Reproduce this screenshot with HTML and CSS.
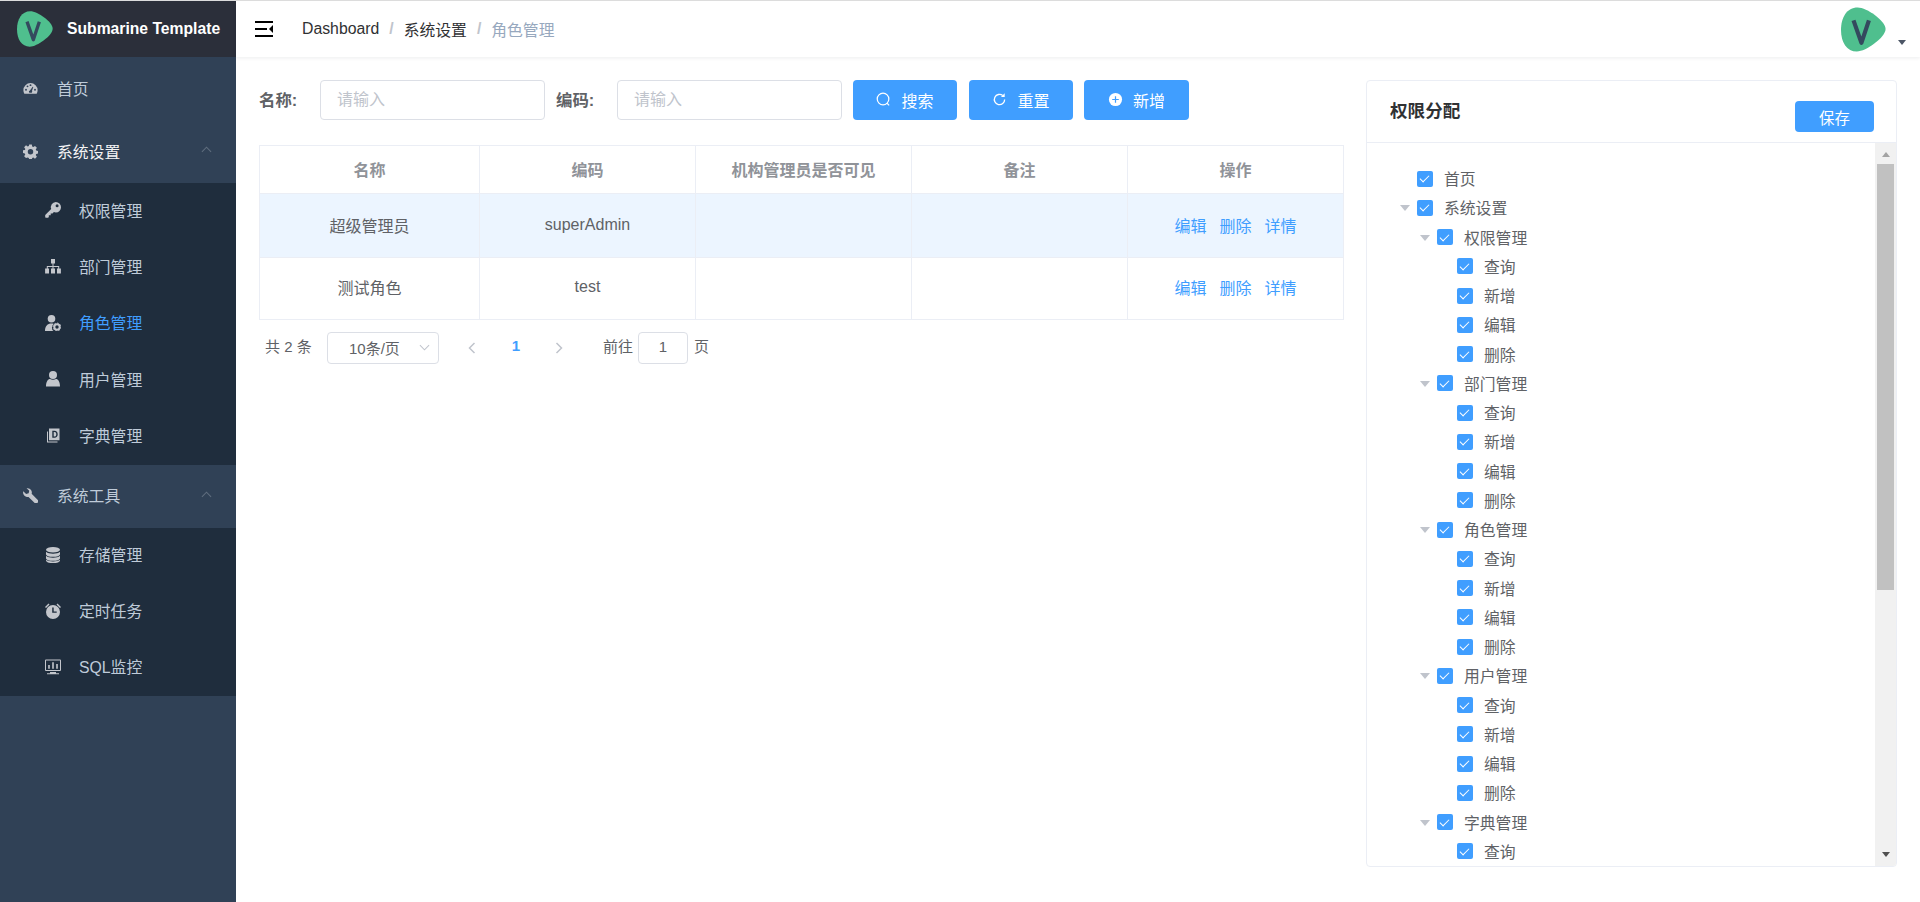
FILE: index.html
```html
<!DOCTYPE html>
<html lang="zh">
<head>
<meta charset="utf-8">
<title>角色管理</title>
<link rel="stylesheet" href="styles.css">
</head>
<body>
<svg class="defs" width="0" height="0">
  <symbol id="logo" viewBox="0 0 108 108">
    <path fill="#4fbf8e" d="M40 1C62 1 107 33 107 53C107 73 60 107 38 107C14 107 0 85 0 55C0 25 14 1 40 1Z"/>
    <path fill="none" stroke="#34495e" stroke-width="10" stroke-linejoin="round" d="M30 32L49 86L67 32"/>
  </symbol>
</svg>
<div class="app">
  <aside class="sidebar">
    <div class="brand">
      <svg class="brand-logo"><use href="#logo"/></svg>
      <span class="brand-title">Submarine Template</span>
    </div>
    <a class="menu-item">
      <svg class="icon" viewBox="0 0 16 16"><path d="M8 2.200A7.600 7.600 0 0 0 .4 9.800c0 1.400.4 2.600 1 3.700h13.200c.6-1.100 1-2.300 1-3.700A7.600 7.600 0 0 0 8 2.200zM3.200 10.300a1 1 0 1 1 0-2 1 1 0 0 1 0 2zm1.600-3.600a1 1 0 1 1 0-2 1 1 0 0 1 0 2zM8 5.400a1 1 0 1 1 0-2 1 1 0 0 1 0 2zm1.300 7H6.700a1.400 1.400 0 0 1 .7-2.200L10.300 6l.7.3-1.400 4.100c.4.6.2 1.500-.3 2zm3.500-2.100a1 1 0 1 1 0-2 1 1 0 0 1 0 2z"/></svg>
      <span>首页</span>
    </a>
    <a class="menu-item open">
      <svg class="icon" viewBox="0 0 16 16"><path fill-rule="evenodd" d="M6.600.6h2.800l.4 2.100 1.200.5L12.800 2l2 2-1.200 1.800.5 1.200 2.100.4v2.800l-2.100.4-.5 1.200 1.200 1.800-2 2-1.800-1.200-1.200.5-.4 2.100H6.600l-.4-2.100-1.200-.5L3.200 15l-2-2 1.200-1.800-.5-1.200L-.1 9.600V6.800l2.100-.4.5-1.200L1.200 3.400l2-2L5 2.600l1.200-.5zM8 5.300a2.900 2.900 0 1 0 0 5.800 2.900 2.900 0 0 0 0-5.800z"/></svg>
      <span>系统设置</span>
      <svg class="chev" viewBox="0 0 12 7"><path d="M1 6l5-5 5 5"/></svg>
    </a>
    <div class="submenu">
      <a class="sub-item">
        <svg class="icon" viewBox="0 0 16 16"><path fill-rule="evenodd" d="M10.800 0a5.200 5.200 0 0 1 0 10.400c-.7 0-1.300-.1-1.900-.4l-1.400 1.400H5.700v1.900H3.800V15l-.7.700H.6L.2 15v-2l6-6a5.200 5.200 0 0 1 4.600-7zm1.300 2.300a1.500 1.500 0 1 0 0 3 1.500 1.500 0 0 0 0-3z"/></svg>
        <span>权限管理</span>
      </a>
      <a class="sub-item">
        <svg class="icon" viewBox="0 0 16 16"><path d="M6 0h4v4.500H8.500V7h5.700v2.500H15.900v5H12V9.500h1.200V8H8.500v1.500H10v5H6v-5h1.500V8H2.800v1.500H4v5H.1v-5h1.700V7h5.700V4.500H6z"/></svg>
        <span>部门管理</span>
      </a>
      <a class="sub-item active">
        <svg class="icon" viewBox="0 0 16 16"><circle cx="6.500" cy="3.800" r="3.800"/><path d="M0 16c0-5 2.500-7.500 6.500-7.500 1 0 1.700.2 2.300.4A4.500 4.500 0 0 0 8.500 16z"/><circle cx="12" cy="12" r="2.700" fill="none" stroke="currentColor" stroke-width="2"/><circle cx="12" cy="12" r="3.900" fill="none" stroke="currentColor" stroke-width="1" stroke-dasharray="1.500 1.500"/></svg>
        <span>角色管理</span>
      </a>
      <a class="sub-item">
        <svg class="icon" viewBox="0 0 16 16"><circle cx="8" cy="4" r="4"/><path d="M1 15.500c0-5 2-7.500 4-7.500 1.500 1 4.500 1 6 0 2 0 4 2.500 4 7.500z"/></svg>
        <span>用户管理</span>
      </a>
      <a class="sub-item">
        <svg class="icon" viewBox="0 0 16 16"><path fill-rule="evenodd" d="M4 .5h10.500v11.700H4zM7.300 2.800v7h2.200c2 0 3.200-1.400 3.200-3.500s-1.200-3.500-3.200-3.500zm1.400 1.200h.8c1.200 0 1.800.9 1.800 2.300s-.6 2.300-1.800 2.300h-.8z"/><path d="M2 3.500h1v10h9.500v1H2z"/></svg>
        <span>字典管理</span>
      </a>
    </div>
    <a class="menu-item">
      <svg class="icon" viewBox="0 0 16 16"><path d="M5 .2a4.600 4.600 0 0 1 4.200 6l6.300 6.300a2.300 2.300 0 0 1-3.300 3.300L5.900 9.500A4.800 4.800 0 0 1 .3 3.400l3 2.900L6 5.600l.7-2.600L3.800.3z"/></svg>
      <span>系统工具</span>
      <svg class="chev" viewBox="0 0 12 7"><path d="M1 6l5-5 5 5"/></svg>
    </a>
    <div class="submenu tight">
      <a class="sub-item">
        <svg class="icon" viewBox="0 0 16 16"><ellipse cx="8" cy="2.800" rx="7" ry="2.800"/><path d="M1 4.800c1.500 1.400 4 1.900 7 1.900s5.500-.5 7-1.900v2.400C15 8.800 12 9.800 8 9.800s-7-1-7-2.600z"/><path d="M1 8.800c1.500 1.400 4 1.900 7 1.900s5.500-.5 7-1.900v2.400c0 1.600-3 2.600-7 2.600s-7-1-7-2.600z"/><path d="M1 12.800c1.500 1.200 4 1.700 7 1.700s5.500-.5 7-1.700v.6c0 1.600-3 2.600-7 2.600s-7-1-7-2.600z"/></svg>
        <span>存储管理</span>
      </a>
      <a class="sub-item">
        <svg class="icon" viewBox="0 0 16 16"><path fill-rule="evenodd" d="M8 2a7 7 0 1 1 0 14A7 7 0 0 1 8 2zm-.8 2.500v5.300h4.500V8.400H8.700V4.500z"/><path d="M0 4l3.500-3.500 1 1L1 5zM16 4L12.500.5l-1 1L15 5z"/></svg>
        <span>定时任务</span>
      </a>
      <a class="sub-item">
        <svg class="icon" viewBox="0 0 16 16"><path fill-rule="evenodd" d="M1 .5h14a1 1 0 0 1 1 1V11a1 1 0 0 1-1 1H1a1 1 0 0 1-1-1V1.500a1 1 0 0 1 1-1zM1 1.500V11h14V1.500z"/><path d="M3.200 6h1.600v3.700H3.200zM7.200 3.200h1.600v6.500H7.200zM11.200 5h1.600v4.700h-1.600zM5 13h6v1.200h3v1H2v-1h3z"/></svg>
        <span>SQL监控</span>
      </a>
    </div>
  </aside>

  <div class="main">
    <header class="topbar">
      <svg class="hamburger" viewBox="0 0 18 16"><path d="M0 0h18v2H0zM0 7h12v2H0zM0 14h18v2H0zM18 4v8l-4-4z"/></svg>
      <nav class="crumbs">
        <span class="crumb">Dashboard</span><span class="sep">/</span>
        <span class="crumb">系统设置</span><span class="sep">/</span>
        <span class="crumb last">角色管理</span>
      </nav>
      <div class="avatar-box">
        <svg class="avatar"><use href="#logo"/></svg>
        <span class="avatar-caret"></span>
      </div>
    </header>

    <div class="content">
      <section class="left">
        <div class="filter">
          <label class="f-label">名称:</label>
          <div class="f-input">请输入</div>
          <label class="f-label second">编码:</label>
          <div class="f-input">请输入</div>
          <button class="btn first-btn">
            <svg class="btn-ic" viewBox="0 0 16 16"><circle cx="7.500" cy="7.500" r="6.200" fill="none" stroke="#fff" stroke-width="1.300"/><path d="M11.800 12l2.200 2.300" stroke="#fff" stroke-width="1.300" fill="none"/></svg>
            <span>搜索</span>
          </button>
          <button class="btn">
            <svg class="btn-ic" viewBox="0 0 16 16"><path d="M13.500 8A5.500 5.500 0 1 1 11.500 3.800" fill="none" stroke="#fff" stroke-width="1.400"/><path d="M13.500 1.200v4h-4z" fill="#fff"/></svg>
            <span>重置</span>
          </button>
          <button class="btn wide">
            <svg class="btn-ic" viewBox="0 0 16 16"><circle cx="8" cy="8" r="7" fill="#fff"/><path d="M8 4.500v7M4.500 8h7" stroke="#409eff" stroke-width="1.300"/></svg>
            <span>新增</span>
          </button>
        </div>

        <table class="grid">
          <colgroup><col class="c1"><col class="c2"><col class="c2"><col class="c2"><col></colgroup>
          <thead>
            <tr><th>名称</th><th>编码</th><th>机构管理员是否可见</th><th>备注</th><th>操作</th></tr>
          </thead>
          <tbody>
            <tr class="r1 current">
              <td>超级管理员</td><td>superAdmin</td><td></td><td></td>
              <td><a class="lnk">编辑</a><a class="lnk">删除</a><a class="lnk">详情</a></td>
            </tr>
            <tr class="r2">
              <td>测试角色</td><td>test</td><td></td><td></td>
              <td><a class="lnk">编辑</a><a class="lnk">删除</a><a class="lnk">详情</a></td>
            </tr>
          </tbody>
        </table>

        <div class="pager">
          <span class="total">共 2 条</span>
          <div class="size">
            <span>10条/页</span>
            <svg class="size-chev" viewBox="0 0 12 7"><path d="M1 1l5 5 5-5"/></svg>
          </div>
          <svg class="pg-arrow prev" viewBox="0 0 8 12"><path d="M6.500 1L1.500 6l5 5"/></svg>
          <span class="pg-num">1</span>
          <svg class="pg-arrow next" viewBox="0 0 8 12"><path d="M1.500 1l5 5-5 5"/></svg>
          <span class="goto">前往</span>
          <div class="pg-input">1</div>
          <span class="goto-end">页</span>
        </div>
      </section>

      <section class="card">
        <div class="card-head">
          <h2 class="card-title">权限分配</h2>
          <button class="save">保存</button>
        </div>
        <div class="card-body">
          <div class="tree">
            <div class="node l0 leaf"><i class="caret"></i><i class="cb"></i><span>首页</span></div>
            <div class="node l0"><i class="caret"></i><i class="cb"></i><span>系统设置</span></div>
            <div class="node l1"><i class="caret"></i><i class="cb"></i><span>权限管理</span></div>
            <div class="node l2 leaf"><i class="caret"></i><i class="cb"></i><span>查询</span></div>
            <div class="node l2 leaf"><i class="caret"></i><i class="cb"></i><span>新增</span></div>
            <div class="node l2 leaf"><i class="caret"></i><i class="cb"></i><span>编辑</span></div>
            <div class="node l2 leaf"><i class="caret"></i><i class="cb"></i><span>删除</span></div>
            <div class="node l1"><i class="caret"></i><i class="cb"></i><span>部门管理</span></div>
            <div class="node l2 leaf"><i class="caret"></i><i class="cb"></i><span>查询</span></div>
            <div class="node l2 leaf"><i class="caret"></i><i class="cb"></i><span>新增</span></div>
            <div class="node l2 leaf"><i class="caret"></i><i class="cb"></i><span>编辑</span></div>
            <div class="node l2 leaf"><i class="caret"></i><i class="cb"></i><span>删除</span></div>
            <div class="node l1"><i class="caret"></i><i class="cb"></i><span>角色管理</span></div>
            <div class="node l2 leaf"><i class="caret"></i><i class="cb"></i><span>查询</span></div>
            <div class="node l2 leaf"><i class="caret"></i><i class="cb"></i><span>新增</span></div>
            <div class="node l2 leaf"><i class="caret"></i><i class="cb"></i><span>编辑</span></div>
            <div class="node l2 leaf"><i class="caret"></i><i class="cb"></i><span>删除</span></div>
            <div class="node l1"><i class="caret"></i><i class="cb"></i><span>用户管理</span></div>
            <div class="node l2 leaf"><i class="caret"></i><i class="cb"></i><span>查询</span></div>
            <div class="node l2 leaf"><i class="caret"></i><i class="cb"></i><span>新增</span></div>
            <div class="node l2 leaf"><i class="caret"></i><i class="cb"></i><span>编辑</span></div>
            <div class="node l2 leaf"><i class="caret"></i><i class="cb"></i><span>删除</span></div>
            <div class="node l1"><i class="caret"></i><i class="cb"></i><span>字典管理</span></div>
            <div class="node l2 leaf"><i class="caret"></i><i class="cb"></i><span>查询</span></div>
          </div>
          <div class="scrollbar">
            <span class="sb-up"></span>
            <span class="sb-thumb"></span>
            <span class="sb-down"></span>
          </div>
        </div>
      </section>
    </div>
  </div>
</div>
</body>
</html>
```

FILE: styles.css
```css
* { box-sizing: border-box; }
html, body { margin: 0; height: 100%; overflow: hidden; }
body {
  font-family: "Liberation Sans", "Noto Sans CJK SC", sans-serif;
  font-size: 15.800px;
  color: #606266;
  background: #fff;
  border-top: 1px solid #dcdcdc;
}
.defs { position: absolute; }
.app { display: flex; height: 901px; }

/* sidebar */
.sidebar { width: 236px; flex: none; background: #304156; color: #bfcbd9; }
.brand { height: 56px; background: #2b2f3a; display: flex; align-items: center; padding-left: 17px; }
.brand-logo { width: 36px; height: 36px; flex: none; }
.brand-title { margin-left: 14px; color: #fff; font-weight: 700; font-size: 15.700px; white-space: nowrap; }
.menu-item { display: flex; align-items: center; height: 63px; padding: 0 0 1px 23px; }
.menu-item.open { color: #f4f4f5; }
.menu-item .icon { width: 15px; height: 15px; margin-right: 19px; }
.icon { fill: #c3c6cc; flex: none; color: #c3c6cc; }
.chev { width: 11px; height: 7px; margin-left: auto; margin-right: 24px; margin-top: -3px; fill: none; stroke: #5f6d7e; stroke-width: 1.200; }
.submenu { background: #1f2d3d; }
.sub-item { display: flex; align-items: center; height: 56.400px; padding: 0 0 2px 45px; }
.tight .sub-item { height: 56px; }
.sub-item .icon { width: 16px; height: 16px; margin-right: 18px; }
.sub-item.active { color: #409eff; }

/* main */
.main { flex: 1; min-width: 0; display: flex; flex-direction: column; }
.topbar { height: 56px; flex: none; display: flex; align-items: center; padding-left: 19px; box-shadow: 0 1px 4px rgba(0, 21, 41, .08); }
.hamburger { width: 18px; height: 16px; fill: #000; flex: none; margin-top: -1px; }
.crumbs { margin-left: 29px; display: flex; align-items: center; color: #303133; white-space: nowrap; }
.sep { margin: 0 10px; color: #c0c4cc; font-weight: 700; }
.crumb.last { color: #97a8be; }
.avatar-box { margin-left: auto; display: flex; align-items: flex-end; padding-right: 14px; }
.avatar { width: 45px; height: 45px; flex: none; }
.avatar-caret { width: 0; height: 0; border: 4.500px solid transparent; border-top: 5px solid #4c5666; border-bottom: 0; margin: 0 0 7px 12px; }

.content { flex: 1; min-height: 0; display: flex; gap: 21px; padding: 23px 23px 35px; }
.left { width: 1086px; flex: none; }

/* filter */
.filter { display: flex; align-items: center; height: 40px; }
.f-label { width: 61px; flex: none; font-weight: 700; font-size: 16.400px; color: #606266; padding-bottom: 2px; }
.f-label.second { margin-left: 11px; }
.f-input { width: 225px; height: 40px; flex: none; border: 1px solid #dcdfe6; border-radius: 4px; padding-left: 16px; line-height: 37px; font-size: 16px; color: #c0c4cc; }
.btn { width: 104px; height: 40px; flex: none; margin-left: 12px; border: 0; border-radius: 4px; background: #409eff; color: #fff; font: inherit; font-size: 16px; display: flex; align-items: center; justify-content: center; gap: 10px; padding: 0 0 1px; }
.btn.first-btn { margin-left: 11px; }
.btn.wide { width: 105px; margin-left: 11px; }
.btn-ic { width: 15px; height: 15px; flex: none; }

/* table */
.grid { width: 1085px; margin-top: 25px; border-collapse: collapse; table-layout: fixed; font-size: 16px; }
.c1 { width: 220px; }
.c2 { width: 216px; }
.grid th, .grid td { border: 1px solid #ebeef5; text-align: center; padding: 0 0 2px; }
.grid th { height: 48px; color: #909399; font-weight: 700; }
.r1 td { height: 64px; }
.r2 td { height: 61.500px; }
.current td { background: #ecf5ff; }
.lnk { color: #409eff; margin: 0 6.500px; }

/* pager */
.pager { display: flex; align-items: center; height: 32px; margin-top: 12px; padding-left: 6px; font-size: 15px; color: #606266; }
.pager > span { position: relative; top: -2px; }
.total { width: 62px; flex: none; }
.size { width: 112px; height: 32px; flex: none; border: 1px solid #dcdfe6; border-radius: 4px; display: flex; align-items: center; padding-left: 21px; }
.size-chev { width: 11px; height: 7px; margin-left: auto; margin-right: 8px; fill: none; stroke: #c0c4cc; stroke-width: 1.100; }
.pg-arrow { width: 8px; height: 12px; flex: none; fill: none; stroke: #c0c4cc; stroke-width: 1.500; }
.prev { margin-left: 29px; }
.pg-num { width: 20px; margin-left: 30px; text-align: center; color: #409eff; font-weight: 700; }
.next { margin-left: 29px; }
.goto { margin-left: 40px; }
.pg-input { width: 50px; height: 32px; flex: none; margin-left: 5px; border: 1px solid #dcdfe6; border-radius: 4px; text-align: center; line-height: 27px; }
.goto-end { margin-left: 6px; }

/* card */
.card { flex: 1; min-width: 0; display: flex; flex-direction: column; border: 1px solid #ebeef5; border-radius: 4px; overflow: hidden; }
.card-head { height: 62px; flex: none; border-bottom: 1px solid #ebeef5; display: flex; align-items: flex-start; justify-content: space-between; padding: 20px 22px 0 23px; }
.card-title { margin: 0; font-size: 17.600px; line-height: 20px; font-weight: 700; color: #303133; }
.save { width: 79px; height: 31px; border: 0; border-radius: 4px; background: #409eff; color: #fff; font: inherit; font-size: 15.400px; padding: 0; }
.card-body { flex: 1; min-height: 0; display: flex; }
.tree { flex: 1; min-width: 0; overflow: hidden; padding-top: 21px; }
.node { display: flex; align-items: center; height: 29.260px; }
.l0 { padding-left: 33px; }
.l1 { padding-left: 53px; }
.l2 { padding-left: 73px; }
.caret { width: 0; height: 0; flex: none; margin: 1px 7px 0 0; border: 5px solid transparent; border-top: 6px solid #c0c4cc; border-bottom: 0; }
.leaf .caret { visibility: hidden; }
.cb { width: 16px; height: 16px; flex: none; margin-right: 11px; border-radius: 2px; background: #409eff; position: relative; }
.cb::after { content: ""; position: absolute; left: 5px; top: 2.500px; width: 4px; height: 8px; border: solid #fff; border-width: 0 1px 1px 0; transform: rotate(45deg); }
.scrollbar { width: 21px; flex: none; background: #f1f1f1; display: flex; flex-direction: column; align-items: center; }
.sb-up { width: 0; height: 0; flex: none; margin: 9px 0 7px; border: 4.500px solid transparent; border-bottom: 5px solid #a3a3a3; border-top: 0; }
.sb-thumb { width: 17px; height: 426px; flex: none; background: #c1c1c1; }
.sb-down { width: 0; height: 0; flex: none; margin-top: auto; margin-bottom: 9px; border: 4.500px solid transparent; border-top: 5px solid #505050; border-bottom: 0; }
```
